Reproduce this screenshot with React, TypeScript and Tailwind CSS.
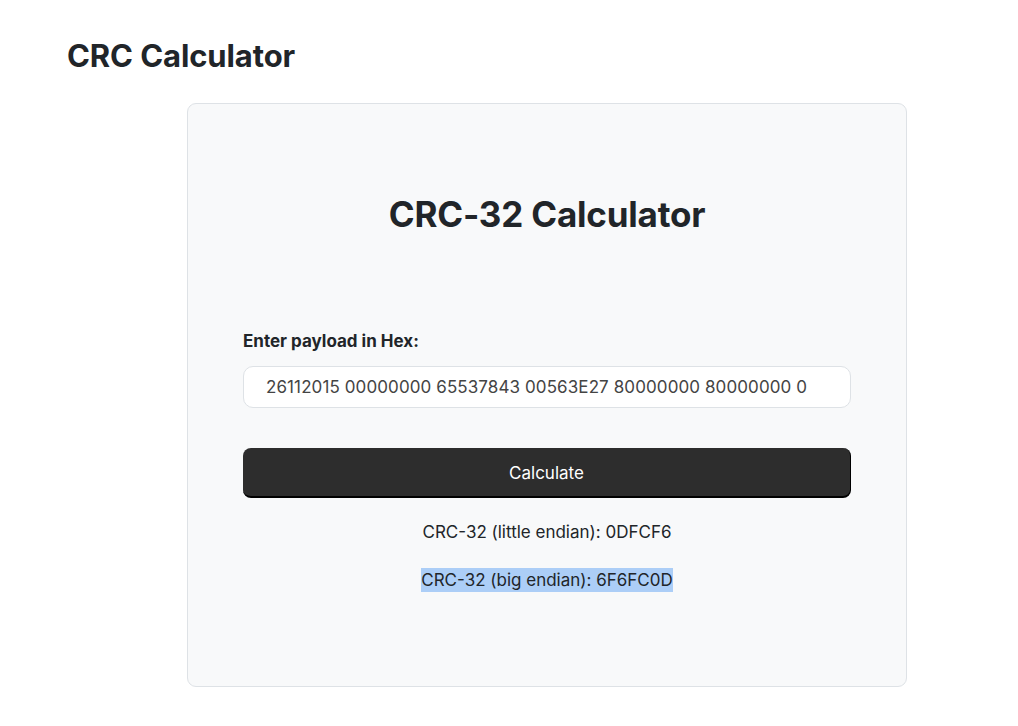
import React from "react";

export default function App() {
  return (
    <div className="min-h-screen bg-white text-[#212529]" style={{ fontFamily: "Inter, 'Noto Sans', sans-serif" }}>
      <div className="pl-[67px] pt-[38px]">
        <h1 className="text-[31px] font-bold leading-[36px] tracking-[-0.1px]">CRC Calculator</h1>
      </div>
      <div className="pl-[187px] pt-[29px]">
        <div className="w-[720px] h-[584px] rounded-[9px] border border-[#dee2e6] bg-[#f8f9fa] px-[55px] pt-[88px]">
          <h2 className="text-center text-[35px] font-bold leading-[44px] tracking-[-0.2px]">CRC-32 Calculator</h2>
          <label className="mt-[93px] block text-[17px] font-bold leading-[24px]">Enter payload in Hex:</label>
          <input
            readOnly
            value="26112015 00000000 65537843 00563E27 80000000 80000000 00000000"
            className="mt-[13px] block w-full h-[42px] rounded-[10px] border border-[#dee2e6] bg-white pl-[22px] pr-[43px] text-[17px] tracking-[0.1px] text-[#444] outline-none"
            style={{ fontFamily: "Inter, 'Noto Sans', sans-serif" }}
          />
          <button className="mt-[40px] w-full h-[50px] rounded-[8px] bg-[#2d2d2d] text-white text-[17px] pt-[3px] border-b-[2px] border-r-[1px] border-black flex items-center justify-center">Calculate</button>
          <p className="mt-[22px] text-center text-[17px] leading-[24px]">CRC-32 (little endian): 0DFCF6</p>
          <p className="mt-[24px] text-center text-[17px] leading-[24px]">
            <span className="bg-[#accef7] py-[2px]">CRC-32 (big endian): 6F6FC0D</span>
          </p>
        </div>
      </div>
    </div>
  );
}
